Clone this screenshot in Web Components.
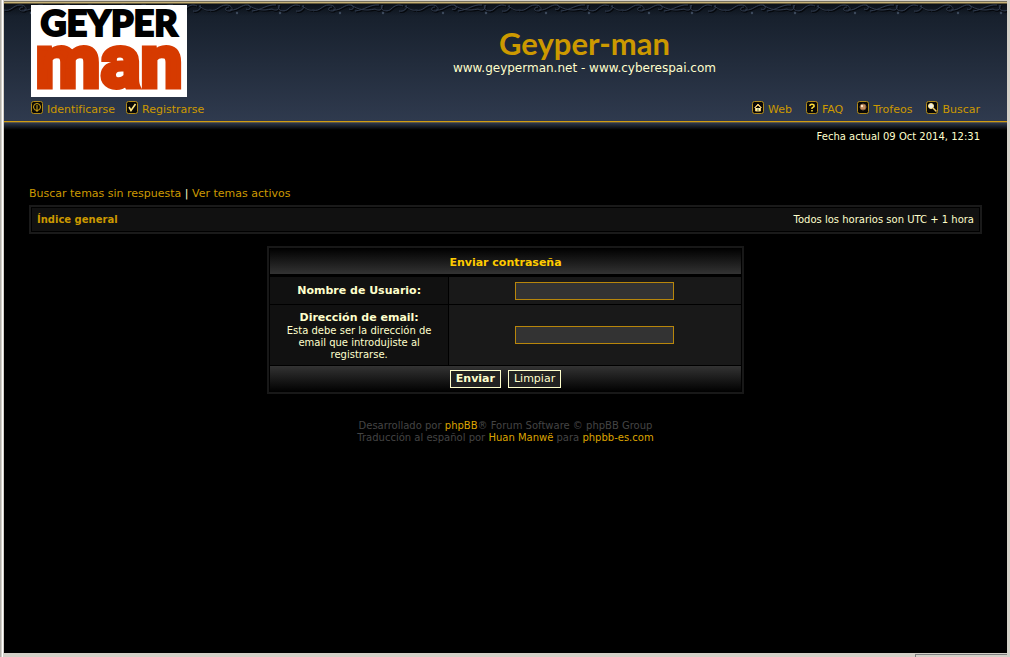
<!DOCTYPE html>
<html lang="es">
<head>
<meta charset="utf-8">
<title>Geyper-man • Enviar contraseña</title>
<style>
html,body{margin:0;height:100%;background:#d4d0c8}
body{font:11px/13px "DejaVu Sans",Verdana,sans-serif;color:#ffffcc}
</style>
</head>
<body>
<forum-page>
  <forum-header slot="header">
    <forum-logo slot="logo"></forum-logo>
    <span slot="title">Geyper-man</span>
    <span slot="subtitle">www.geyperman.net - www.cyberespai.com</span>
    <nav-link slot="left" icon="login">Identificarse</nav-link>
    <nav-link slot="left" icon="check">Registrarse</nav-link>
    <nav-link slot="right" icon="home">Web</nav-link>
    <nav-link slot="right" icon="help">FAQ</nav-link>
    <nav-link slot="right" icon="ball">Trofeos</nav-link>
    <nav-link slot="right" icon="search">Buscar</nav-link>
  </forum-header>
  <forum-topics></forum-topics>
  <forum-breadcrumb>Todos los horarios son UTC + 1 hora</forum-breadcrumb>
  <password-form></password-form>
  <forum-credits></forum-credits>
</forum-page>
<script>
const define = (name, html, setup) => customElements.define(name, class extends HTMLElement {
  constructor() {
    super();
    this.attachShadow({ mode: 'open' }).innerHTML = html;
  }
  connectedCallback() { if (setup) setup(this, this.shadowRoot); }
});

define('forum-page', `<style>
:host{display:grid;grid-template-rows:1fr 4px;min-height:100vh;box-sizing:border-box;padding:0 3px 0 4px;background:linear-gradient(90deg,#b0aea8 1px,#d4d0c8 1px 2px,#fff 2px 3px,#d4d0c8 3px)}
.page{background:#000}
main{padding:0 25px}
time{display:block;text-align:right;font-size:10px;line-height:13px;margin:0 2px 44px}
.status{height:3px;margin:1px 0 0 auto;width:92px;border:solid #808080;border-width:1px 0 0 1px;box-sizing:border-box}
</style>
<div class="page"><slot name="header"></slot>
<main><time datetime="2014-10-09T12:31">Fecha actual 09 Oct 2014, 12:31</time><slot></slot></main></div>
<div class="status"></div>`);

define('forum-header', `<style>
:host{display:block}
.bar{position:relative;background:linear-gradient(#141d29 4px,#18212e 20px,#2f3a4e);height:121px}
.trim{position:absolute;top:0;left:0;width:100%;height:16px}
.brand{position:relative;display:grid;grid-template-columns:156px 1fr;padding:5px 25px 0 27px}
.title{text-align:center;padding-top:21px}
h1{margin:0;font:700 31px/35px Lato,sans-serif;color:#cc9900}
p{margin:0;font-size:12px;line-height:15px}
nav{position:relative;display:flex;justify-content:space-between;padding:4px 27px 0}
.group{display:flex;gap:11px}
.group.right{gap:14px}
.shade{height:9px;background:linear-gradient(#d09c10 1px,#5e5747 1px 2px,#2c3749 2px,#000)}
</style>
<header class="bar">
<svg class="trim" aria-hidden="true"><defs>
<linearGradient id="d" x2="0" y2="1"><stop offset=".2" stop-color="#0b1018"/><stop offset="1" stop-color="#0b1018" stop-opacity="0"/></linearGradient>
<pattern id="o" width="103" height="16" patternUnits="userSpaceOnUse">
<g fill="none" stroke="#05080d" stroke-width="1.500" transform="translate(1 1)"><path id="v" d="M0 10c7 2 9-5 16-5s8 6 3 6-4-4 0-4M20 10c8 1 11-6 18-5 5 2 1 6-2 4M38 5c8 5 14 6 24 4M42 11c10-1 15-7 24-6M62 9c5 3 9-1 6-4M70 5c-5 5 4 8 8 4s8-5 12-3M86 11c4 1 9-2 7-6M92 6c5 3 7 5 11 4"/></g>
<g fill="none" stroke="#303b4e"><use href="#v"/></g><g fill="#3c485b"><circle cx="27" cy="13" r="1.200"/><circle cx="70" cy="13" r="1.200"/></g>
</pattern></defs><rect width="100%" height="16" fill="url(#d)"/><rect width="100%" height="16" fill="url(#o)"/><g><rect width="100%" height="1" fill="#d4d0c8"/><rect y="1" width="100%" height="1" fill="#77715f"/><rect y="2" width="100%" height="1" fill="#c7b277"/><rect y="3" width="100%" height="1" fill="#655a3c"/></g></svg>
<div class="brand"><slot name="logo"></slot><div class="title"><h1><slot name="title"></slot></h1><p><slot name="subtitle"></slot></p></div></div>
<nav><div class="group"><slot name="left"></slot></div><div class="group right"><slot name="right"></slot></div></nav>
</header><div class="shade"></div>`);

define('forum-logo', `<style>
:host{display:block;height:92px}
a,svg{display:block}
svg{overflow:visible}
</style>
<a href="#" aria-label="Geyper man"><svg width="156" height="92" viewBox="0 0 156 92"><path fill="#fff" d="M0 0h156v92H0z"/>
<text x="78" y="31" text-anchor="middle" font-family="Lato" font-weight="900" font-size="36" stroke="#000" stroke-width="2">GEYPER</text>
<text x="78" y="82" text-anchor="middle" font-family="Roboto" font-weight="700" font-size="75" fill="#d63a00" stroke="#d63a00" stroke-width="5">man</text></svg></a>`);

const icons = {
  login: '<circle cx="6" cy="6" r="3.500"/><path d="M6 4v7"/>',
  check: '<path d="M3 6l2 3.500L9.500 3" stroke="#ffe680" stroke-width="1.600"/>',
  home: '<path d="M2.500 7L6 3l3.500 4M3.500 6.500V10h5V6.500L6 4z" fill="#fff5c0" stroke="#f5ca70"/><path d="M6 7.500V10" stroke="#608030"/>',
  help: '<path d="M4 5V4q2-1.500 4 0v1.500l-2 1.500v1M6 9v1.500" stroke="#ffdf38" stroke-width="1.500"/>',
  ball: '<circle cx="6" cy="6" r="3" fill="#c58c5c" stroke="#8c6242"/><circle cx="5" cy="5" r="1.200" fill="#ffe8c8" stroke="none"/>',
  search: '<circle cx="5" cy="5" r="2.500" fill="#eee" stroke="#ffe890"/><path d="M7 7l3.500 3.500" stroke="#f3ce70" stroke-width="1.500"/>'
};
define('nav-link', `<style>
:host{display:block}
a{display:flex;gap:3px;color:#cc9900;text-decoration:none;line-height:14px}
svg{display:block;flex:none}
span{padding-top:2px}
</style>
<a href="#"><svg width="13" height="14" viewBox="0 0 13 14" aria-hidden="true"><rect x=".5" y=".5" width="11" height="12" rx="2" fill="#090806" stroke="#b18a18"/><g fill="none" stroke="#d7a817"></g></svg><span><slot></slot></span></a>`,
(el, root) => { root.querySelector('g').innerHTML = icons[el.getAttribute('icon')]; });

define('forum-topics', `<style>
:host{display:block;line-height:13px;margin-bottom:5px}
a{color:#cc9900;text-decoration:none}
</style><a href="#">Buscar temas sin respuesta</a> | <a href="#">Ver temas activos</a>`);

define('forum-breadcrumb', `<style>
:host{display:flex;justify-content:space-between;align-items:center;border:2px solid #1a1a1a;padding:5px 6px;box-shadow:inset 0 0 0 1px #000;background:#111;font-size:10px;line-height:15px;margin-bottom:12px}
a{color:#cc9900;font-weight:700;text-decoration:none}
</style><a href="#">Índice general</a><span><slot></slot></span>`);

define('password-form', `<style>
:host{display:block;width:50%;margin:0 auto}
form{border:2px solid #181818;padding:0 1px}
table{width:100%;border-spacing:0;table-layout:fixed}
.name{width:38%}
td,th{padding:0;text-align:center}
thead th{height:26px;background:linear-gradient(#000,#333);background-clip:padding-box;color:#ffcc00;font-size:11px;border-bottom:3px solid #000}
thead span{display:block;padding-top:3px}
tbody th{background:#111;padding:4px 15px;border-right:1px solid #000;border-bottom:1px solid #000;font-weight:400}
tbody td{background:#191919;border-bottom:1px solid #000}
label{display:block;font-weight:700;font-size:11px;line-height:19px}
.long label{line-height:14px;padding-top:2px}
small{display:block;font-size:10px;line-height:12px}
input{box-sizing:border-box;width:159px;height:18px;border:1px solid #b8860b;background:#333;color:#ffffcc;font:inherit;padding:1px 3px;display:block;margin:0 auto}
tfoot td{height:26px;background:linear-gradient(#333,#000)}
.buttons{display:flex;justify-content:center;gap:7px}
button{box-sizing:border-box;height:18px;border:1px solid #ffffcc;background:#222;color:#ffffcc;font:11px/14px "DejaVu Sans",Verdana,sans-serif;padding:0 5px}
button.main{font-weight:700}
</style>
<form><table>
<colgroup><col class="name"><col></colgroup>
<thead><tr><th colspan="2"><span>Enviar contraseña</span></th></tr></thead>
<tbody><tr><th scope="row"><label for="user">Nombre de Usuario:</label></th><td><input id="user" type="text"></td></tr>
<tr class="long"><th scope="row"><label for="mail">Dirección de email:</label><small>Esta debe ser la dirección de email que introdujiste al registrarse.</small></th><td><input id="mail" type="text"></td></tr></tbody>
<tfoot><tr><td colspan="2"><div class="buttons"><button class="main" type="submit">Enviar</button><button type="reset">Limpiar</button></div></td></tr></tfoot>
</table></form>`);

define('forum-credits', `<style>
:host{display:block;text-align:center;font-size:10px;line-height:12px;color:#444;margin-top:26px}
a{color:#dca400;text-decoration:none}
</style>Desarrollado por <a href="#">phpBB</a>® Forum Software © phpBB Group<br>Traducción al español por <a href="#">Huan Manwë</a> para <a href="#">phpbb-es.com</a>`);
</script>
</body>
</html>
